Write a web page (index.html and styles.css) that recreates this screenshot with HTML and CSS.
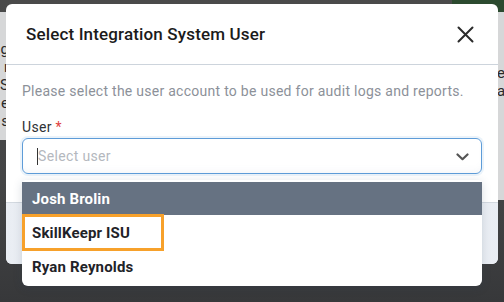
FILE: index.html
```html
<!DOCTYPE html>
<html>
<head>
<meta charset="utf-8">
<link rel="stylesheet" href="styles.css">
</head>
<body>
<div class="page">
  <div class="behind behind-left">
    <span>g</span><span>r</span><span>S</span><span>e</span><span>s</span>
  </div>
  <div class="behind behind-right">
    <span>e</span><span>a</span>
  </div>
  <div class="green-btn"></div>

  <div class="modal">
    <div class="modal-header">
      <h2 class="modal-title">Select Integration System User</h2>
      <button class="close-btn" aria-label="Close">
        <svg width="17" height="17" viewBox="0 0 17 17"><path d="M1.5 1.5 L15.5 15.5 M15.5 1.5 L1.5 15.5" stroke="#2b2b2b" stroke-width="2" stroke-linecap="round" fill="none"/></svg>
      </button>
    </div>
    <div class="modal-body">
      <p class="desc">Please select the user account to be used for audit logs and reports.</p>
      <label class="field-label">User <span class="req">*</span></label>
      <div class="select-wrap">
        <div class="select">
          <span class="placeholder">Select user</span>
          <svg class="chev" width="13" height="8" viewBox="0 0 13 8"><path d="M1.5 1.5 L6.5 6.2 L11.5 1.5" stroke="#555" stroke-width="2.2" stroke-linecap="round" stroke-linejoin="round" fill="none"/></svg>
        </div>
        <div class="menu">
          <div class="option active">Josh Brolin</div>
          <div class="option focus-row"><span class="focus-ring">SkillKeepr ISU</span></div>
          <div class="option">Ryan Reynolds</div>
        </div>
      </div>
    </div>
    <div class="modal-footer"></div>
  </div>
</div>
</body>
</html>
```
FILE: styles.css
```css
* { box-sizing: border-box; }
html, body { margin: 0; padding: 0; }
body {
  font-family: Roboto, "Liberation Sans", sans-serif;
  background: #3e3f40;
}
.page {
  position: relative;
  width: 504px;
  height: 302px;
  overflow: hidden;
  background: linear-gradient(to bottom, #4a4a4a 0%, #444546 60%, #37383a 100%);
}
.behind {
  position: absolute;
  display: flex;
  flex-direction: column;
  font-size: 15px;
  line-height: 18px;
  color: #2a2a2a;
  background: #d6d7d8;
}
.behind-left {
  left: 0;
  top: 12px;
  width: 6px;
  height: 128px;
  padding-top: 28px;
  align-items: flex-end;
}
.behind-left span { margin-right: -3px; }
.behind-right {
  right: 0;
  top: 12px;
  width: 6px;
  height: 188px;
  padding-top: 52px;
  align-items: flex-start;
}
.behind-right span { margin-left: -1px; }
.green-btn {
  position: absolute;
  left: 452px;
  top: -6px;
  width: 70px;
  height: 18px;
  border-radius: 6px;
  background: #2c4a2f;
}
.modal {
  position: absolute;
  left: 6px;
  top: 4px;
  width: 492px;
  height: 260px;
  background: #fff;
  border-radius: 6px;
  display: flex;
  flex-direction: column;
}
.modal-header {
  height: 61px;
  padding: 0 24px 0 20px;
  display: flex;
  align-items: center;
  justify-content: space-between;
  border-bottom: 1px solid #cdd4dc;
  flex: none;
}
.modal-title {
  margin: 0;
  font-size: 17px;
  font-weight: 500;
  color: #1b1b1b;
  letter-spacing: 0.15px;
}
.close-btn {
  border: 0;
  background: none;
  padding: 0;
  width: 17px;
  height: 17px;
  display: flex;
  margin-top: 1px;
}
.modal-body {
  padding: 16px 16px 0 16px;
  flex: 1;
}
.desc {
  margin: 0;
  font-size: 14px;
  line-height: 20px;
  color: #8c9199;
  letter-spacing: 0.27px;
}
.field-label {
  display: block;
  margin-top: 16px;
  font-size: 14px;
  line-height: 20px;
  color: #2f3236;
  letter-spacing: 0.3px;
}
.req { color: #e0413e; }
.select-wrap {
  position: relative;
  margin-top: 1px;
}
.select {
  height: 36px;
  border: 1px solid #5e9cd8;
  border-radius: 6px;
  box-shadow: 0 0 0 2px rgba(94,156,216,0.12), inset 0 -6px 8px -6px rgba(120,140,170,0.12);
  display: flex;
  align-items: center;
  justify-content: space-between;
  padding: 0 12px 0 14px;
}
.placeholder {
  font-size: 14px;
  color: #b4b8be;
  border-left: 1px solid #333;
  line-height: 17px;
  letter-spacing: 0.35px;
}
.chev { margin-top: 1px; }
.menu {
  position: absolute;
  left: 0;
  right: 0;
  top: 42px;
  background: #fff;
  border-radius: 4px 4px 6px 6px;
  padding: 2px 0 2px 0;
  box-shadow: 0 2px 10px rgba(40,60,90,0.18);
}
.option {
  height: 34px;
  display: flex;
  align-items: center;
  padding-left: 10px;
  font-size: 15px;
  font-weight: 700;
  color: #1f2328;
  letter-spacing: 0.15px;
}
.option.active {
  background: #667282;
  color: #fff;
  height: 33px;
}
.focus-row {
  padding-left: 0;
  height: 35px;
  align-items: flex-start;
}
.focus-ring {
  display: flex;
  align-items: center;
  width: 142px;
  height: 37px;
  margin-top: -1px;
  border: 3px solid #f7a12b;
  padding-left: 7px;
}
.modal-footer {
  height: 62px;
  flex: none;
  border-top: 1px solid #d3d9e0;
  background: linear-gradient(to right, #e9edf3, #f6f8fb 20%, #f6f8fb 80%, #e9edf3);
  border-radius: 0 0 6px 6px;
}
```
